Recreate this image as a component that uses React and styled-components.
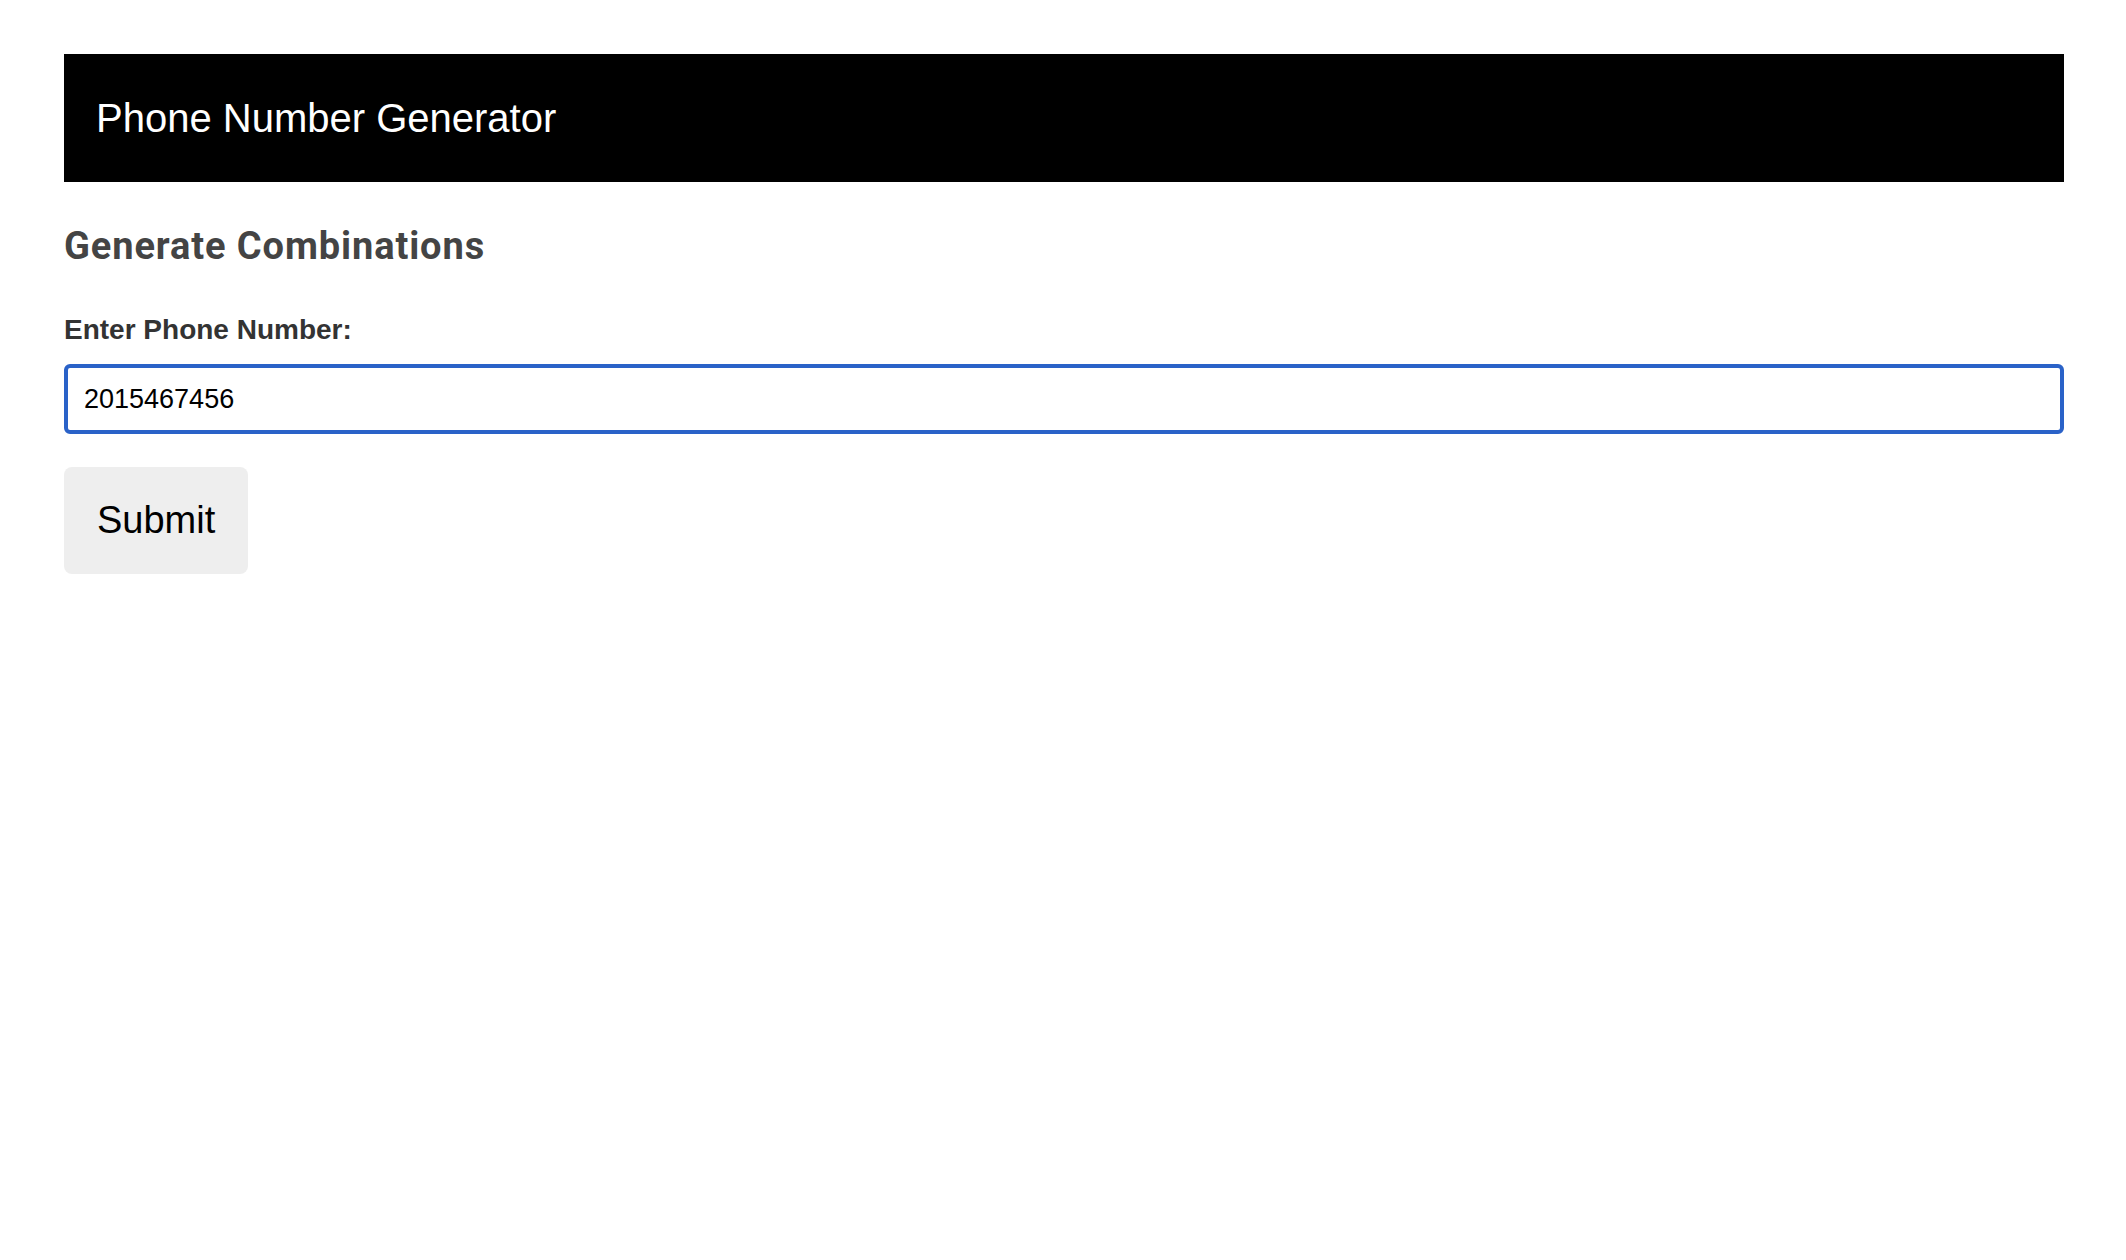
import React, { useState } from 'react';
import styled, { createGlobalStyle } from 'styled-components';

const GlobalStyle = createGlobalStyle`
  html, body {
    margin: 0;
    padding: 0;
    background: #fff;
  }
  body {
    font-family: 'Liberation Sans', Arial, sans-serif;
  }
`;

const Page = styled.div`
  display: flex;
  flex-direction: column;
  padding: 54px 62px 0 64px;
`;
const Header = styled.header`
  background: #000;
  color: #fff;
  padding: 41px 32px;
  font-family: 'Liberation Sans', Arial, sans-serif;
  font-size: 40px;
  line-height: 46px;
`;
const Title = styled.h2`
  margin: 42px 0 0 0;
  font-family: Roboto, 'Liberation Sans', sans-serif;
  font-weight: 700;
  font-size: 38px;
  line-height: 44px;
  letter-spacing: 0.9px;
  color: #444;
`;
const Form = styled.form`
  display: flex;
  flex-direction: column;
  align-items: flex-start;
`;
const Label = styled.label`
  margin-top: 46px;
  font-family: 'Liberation Sans', Arial, sans-serif;
  font-weight: 700;
  font-size: 28px;
  line-height: 32px;
  color: #333;
`;
const Input = styled.input`
  box-sizing: border-box;
  width: 100%;
  height: 70px;
  margin-top: 18px;
  padding: 0 16px;
  border: 4px solid #2a62c8;
  border-radius: 6px;
  outline: none;
  font-family: 'Liberation Sans', Arial, sans-serif;
  font-size: 27px;
  color: #000;
  background: #fff;
`;
const Button = styled.button`
  margin-top: 33px;
  padding: 32px 33px;
  border: none;
  border-radius: 8px;
  background: #eee;
  color: #000;
  font-family: 'Liberation Sans', Arial, sans-serif;
  font-size: 38px;
  line-height: 43px;
  cursor: pointer;
`;

export default function App() {
  const [phone, setPhone] = useState('2015467456');
  return (
    <>
      <GlobalStyle />
      <Page>
        <Header>Phone Number Generator</Header>
        <Title>Generate Combinations</Title>
        <Form onSubmit={(e) => e.preventDefault()}>
          <Label htmlFor="phone">Enter Phone Number:</Label>
          <Input
            id="phone"
            type="text"
            value={phone}
            onChange={(e) => setPhone(e.target.value)}
          />
          <Button type="submit">Submit</Button>
        </Form>
      </Page>
    </>
  );
}
